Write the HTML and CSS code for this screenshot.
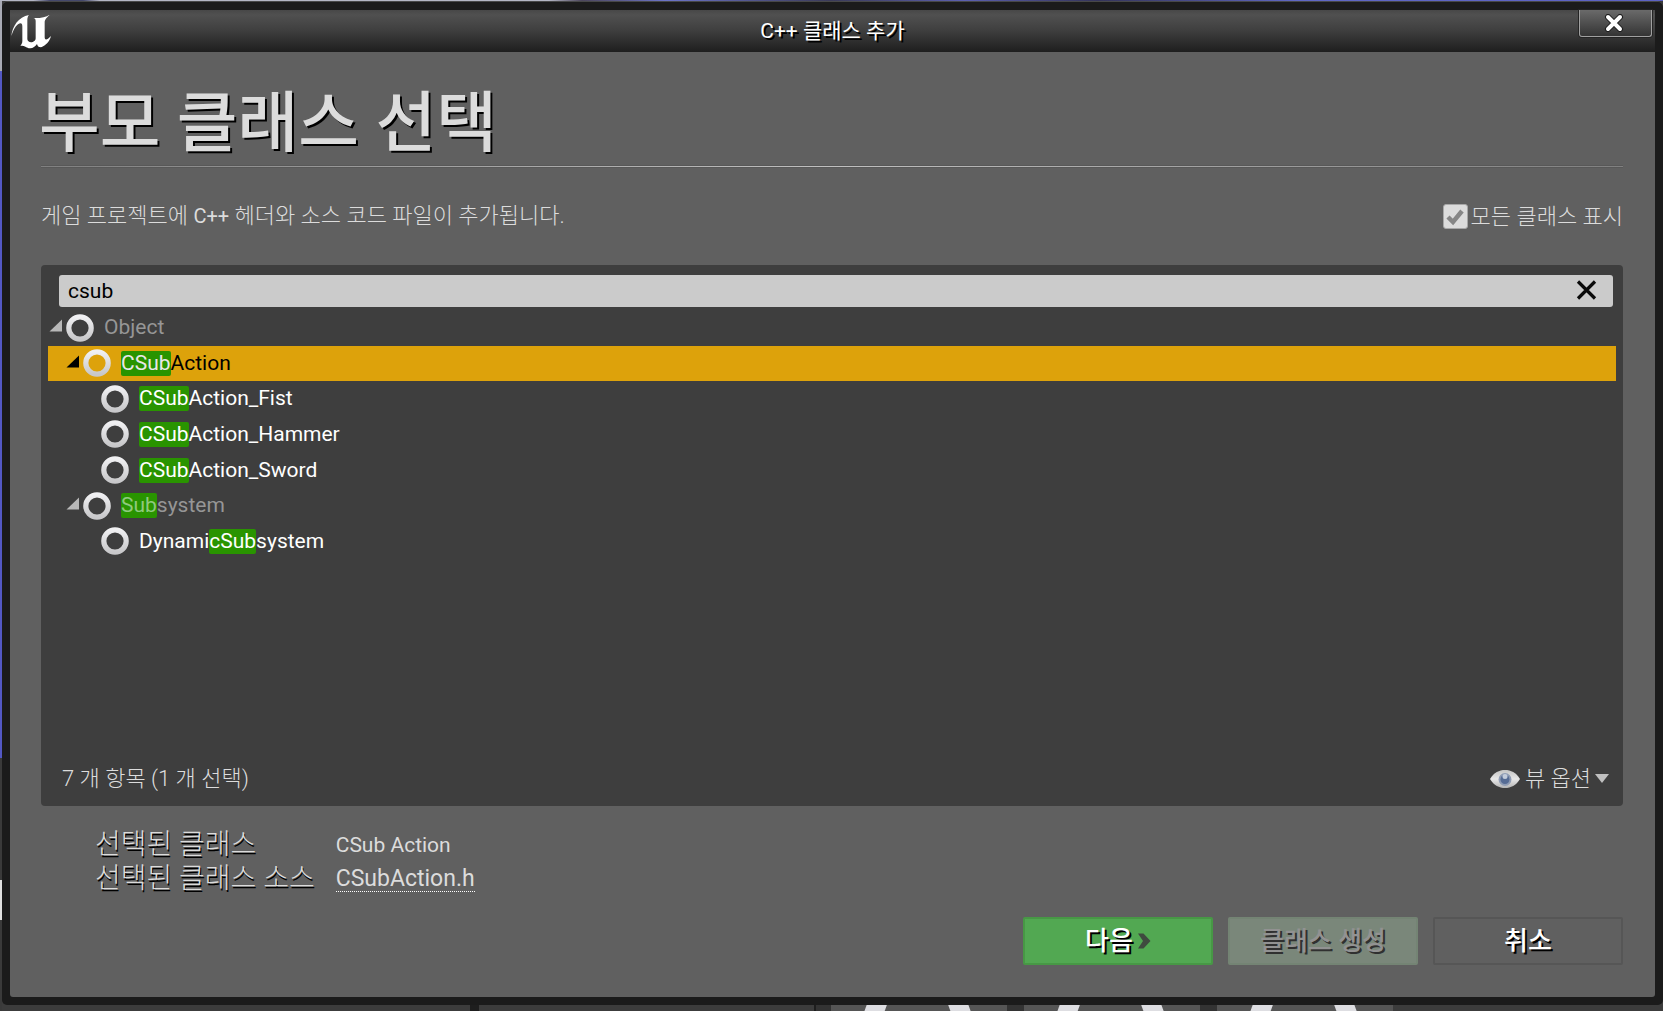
FILE: index.html
```html
<!DOCTYPE html>
<html lang="ko">
<head>
    <meta charset="UTF-8">
    <meta name="viewport" content="width=device-width, initial-scale=1.0">
    <title>C++ 클래스 추가</title>
    <link rel="stylesheet" href="styles.css">
</head>
<body>
    <svg class="symbols" aria-hidden="true">
        <defs>
            <linearGradient id="ring-fill" x1="0" y1="0" x2="0" y2="1">
                <stop offset="0" stop-color="#f0f0f2"/>
                <stop offset="1" stop-color="#c8c8ca"/>
            </linearGradient>
            <symbol id="ring" viewBox="0 0 28 28">
                <circle cx="14" cy="14" r="11.2" fill="none" stroke="url(#ring-fill)" stroke-width="5.2"/>
            </symbol>
            <symbol id="arrow" viewBox="0 0 14 13">
                <path d="M13 0.5V12.5H0.5Z" fill="currentColor"/>
            </symbol>
        </defs>
    </svg>

    <div class="window">
        <header class="title-bar">
            <svg class="logo" viewBox="30 40 126 108" aria-hidden="true">
                <path fill="#fff" d="M34 109C37 80 55 52 87 46C83 50 82 56 82 62V118C82 125 90 130 98 127C104 125 107 121 107 116V64C107 58 104 56 100 55C120 56 138 52 149 45C142 53 134 58 134 68V112C134 121 139 124 153 109C149 125 138 137 123 143C116 143 112 139 111 133C105 141 98 147 89 146C80 145 77 138 61 138C65 134 67 130 67 124V81C67 70 62 69 54 74C45 81 39 93 34 109Z"/>
            </svg>
            <span class="title">C++ 클래스 추가</span>
            <button class="close" type="button" aria-label="닫기">
                <svg width="20" height="18" viewBox="0 0 20 18" aria-hidden="true">
                    <path d="M4 3L16 15M16 3L4 15" stroke="#1c1c1c" stroke-width="6" stroke-linecap="round"/>
                    <path d="M4 3L16 15M16 3L4 15" stroke="#fff" stroke-width="4" stroke-linecap="round"/>
                </svg>
            </button>
        </header>

        <main class="content">
            <h1>부모 클래스 선택</h1>
            <hr class="rule">

            <div class="intro">
                <p>게임 프로젝트에 <span class="latin">C++</span> 헤더와 소스 코드 파일이 추가됩니다.</p>
                <label class="show-all">
                    <input type="checkbox" checked>
                    모든 클래스 표시
                </label>
            </div>

            <section class="panel">
                <div class="search">
                    <input type="text" value="csub" aria-label="클래스 검색">
                    <button type="button" aria-label="지우기">
                        <svg width="22" height="22" viewBox="0 0 22 22" aria-hidden="true">
                            <path d="M2 1.500L19 18.500M19 1.500L2 18.500" stroke="#0a0a0a" stroke-width="3.200"/>
                        </svg>
                    </button>
                </div>

                <ul class="tree" role="tree">
                    <li class="dim" role="treeitem">
                        <svg class="arrow"><use href="#arrow"/></svg>
                        <svg class="ring"><use href="#ring"/></svg>
                        <span>Object</span>
                    </li>
                    <li class="level-1 selected" role="treeitem" aria-selected="true">
                        <svg class="arrow"><use href="#arrow"/></svg>
                        <svg class="ring"><use href="#ring"/></svg>
                        <span><mark>CSub</mark>Action</span>
                    </li>
                    <li class="level-2" role="treeitem">
                        <svg class="ring"><use href="#ring"/></svg>
                        <span><mark>CSub</mark>Action_Fist</span>
                    </li>
                    <li class="level-2" role="treeitem">
                        <svg class="ring"><use href="#ring"/></svg>
                        <span><mark>CSub</mark>Action_Hammer</span>
                    </li>
                    <li class="level-2" role="treeitem">
                        <svg class="ring"><use href="#ring"/></svg>
                        <span><mark>CSub</mark>Action_Sword</span>
                    </li>
                    <li class="level-1 dim" role="treeitem">
                        <svg class="arrow"><use href="#arrow"/></svg>
                        <svg class="ring"><use href="#ring"/></svg>
                        <span><mark>Sub</mark>system</span>
                    </li>
                    <li class="level-2" role="treeitem">
                        <svg class="ring"><use href="#ring"/></svg>
                        <span>Dynami<mark>cSub</mark>system</span>
                    </li>
                </ul>

                <div class="status">
                    <span>7 개 항목 (1 개 선택)</span>
                    <button class="view-options" type="button">
                        <svg width="32" height="24" viewBox="0 0 32 24" aria-hidden="true">
                            <defs>
                                <linearGradient id="eye-fill" x1="0" y1="0" x2="0" y2="1">
                                    <stop offset="0" stop-color="#c4c4c4"/>
                                    <stop offset="0.5" stop-color="#e8e8e8"/>
                                    <stop offset="1" stop-color="#b4b4b4"/>
                                </linearGradient>
                            </defs>
                            <path d="M1 12C5 5.500 10 3 16 3S27 5.500 31 12C27 18.500 22 21 16 21S5 18.500 1 12Z" fill="url(#eye-fill)"/>
                            <circle cx="16" cy="12.500" r="6.500" fill="#909db5"/>
                            <circle cx="16" cy="12.500" r="4.500" fill="#566c95"/>
                            <circle cx="16" cy="9.500" r="2.500" fill="#c3ccdb"/>
                        </svg>
                        <span>뷰 옵션</span>
                        <svg width="14" height="10" viewBox="0 0 14 10" aria-hidden="true">
                            <path d="M0 0H14L7 9Z" fill="#c0c0c0"/>
                        </svg>
                    </button>
                </div>
            </section>

            <dl class="details">
                <dt>선택된 클래스</dt>
                <dd>CSub Action</dd>
                <dt>선택된 클래스 소스</dt>
                <dd><a href="#">CSubAction.h</a></dd>
            </dl>

            <footer class="actions">
                <button class="primary" type="button">
                    다음
                    <svg width="13" height="16" viewBox="0 0 13 16" aria-hidden="true">
                        <path d="M0 0.500H5.500L12.500 8L5.500 15.500H0L5 8Z" fill="#3f4a3f"/>
                    </svg>
                </button>
                <button class="create" type="button" disabled>클래스 생성</button>
                <button type="button">취소</button>
            </footer>
        </main>
    </div>

    <!-- editor behind the dialog -->
    <div class="backdrop-strip">
        <span class="tile"></span>
        <span class="tile"></span>
        <span class="tile"></span>
    </div>
</body>
</html>
```
FILE: styles.css
```css
* {
    box-sizing: border-box;
}

body {
    display: flex;
    flex-direction: column;
    min-height: 100vh;
    margin: 0;
    padding: 1px 0 0 2px;
    font-family: Roboto, "Noto Sans CJK KR", sans-serif;
    font-size: 21px;
    line-height: 25px;
    color: #dcdcdc;
    background:
        linear-gradient(90deg, #b4b6c4 0 2%, #44486c 3% 5%, #b4b6c4 6% 33%, #4c465c 35%, #6c74c8 40%, #3a3a58 50%, #5c60b0 58%, #34345a 66%, #6068c4 78%, #5c62c4) top / 100% 1px no-repeat,
        linear-gradient(#a8aab4 0 7%, #5358c4 7% 75%, #3a3a3a 75% 87%, #e0e0e0 87% 91%, #3a3a3a 91%) left / 2px 100% no-repeat,
        #3c3c3c;
}

button,
input {
    margin: 0;
    padding: 0;
    border: 0;
    background: none;
    font: inherit;
    color: inherit;
}

.symbols {
    position: absolute;
    width: 0;
    height: 0;
}

.window {
    display: flex;
    flex: 1;
    flex-direction: column;
    padding: 9px 8px 8px;
    border-radius: 5px;
    background: #1b1b1b;
    box-shadow: inset 0 1px #484848;
}

.title-bar {
    display: grid;
    grid-template-columns: 1fr auto 1fr;
    height: 42px;
    background: linear-gradient(#484848, #505050 12%, #3e3e3e 50%, #1e1e1e);
}

.logo {
    width: 42px;
    height: 36px;
    margin-top: 3px;
}

.title {
    align-self: center;
    color: #fff;
    text-shadow: 2px 2px #000;
}

.close {
    display: flex;
    align-items: center;
    justify-content: center;
    justify-self: end;
    width: 73px;
    height: 27px;
    margin-right: 3px;
    padding-right: 4px;
    border: 1px solid #a0a0a0;
    border-top: 0;
    border-radius: 0 0 3px 3px;
    background: linear-gradient(#6a6a6a, #343434);
    box-shadow: 0 0 0 1px #242424;
}

.content {
    display: flex;
    flex: 1;
    flex-direction: column;
    padding: 32px 32px 32px 31px;
    border-radius: 0 0 3px 3px;
    background: #606060;
}

h1 {
    margin: 0 0 1px -2px;
    font-size: 66px;
    font-weight: 500;
    line-height: 80px;
    text-shadow: 2px 2px #000;
}

.rule {
    width: 100%;
    height: 3px;
    margin: 0;
    border: solid #585858;
    border-width: 1px 0;
    background: linear-gradient(90deg, #808080, #c0c0c0 50%, #808080);
}

.intro {
    display: flex;
    align-items: center;
    justify-content: space-between;
    margin: 35px 0 36px;
    font-size: 22px;
    font-weight: 300;
}

.intro p {
    margin: 0;
}

.latin {
    font-size: 20px;
    font-weight: 400;
}

.show-all {
    display: flex;
    align-items: center;
    gap: 3px;
}

.show-all input {
    appearance: none;
    width: 25px;
    height: 25px;
    border: 1px solid #a8a8a8;
    border-radius: 3px;
    background: #dcdcdc url("data:image/svg+xml,%3Csvg xmlns='http://www.w3.org/2000/svg' viewBox='0 0 23 23'%3E%3Cpath d='M4 12L9 17L18 6' fill='none' stroke='%23868686' stroke-width='4.500'/%3E%3C/svg%3E") center no-repeat;
}

.panel {
    display: flex;
    flex: 1;
    flex-direction: column;
    padding: 10px 7px 15px;
    border-radius: 4px;
    background: #3e3e3e;
}

.search {
    display: flex;
    align-items: center;
    height: 32px;
    margin: 0 3px 3px 11px;
    padding: 0 15px 0 9px;
    border-radius: 3px;
    background: #cbcbcb;
    color: #000;
}

.search input {
    flex: 1;
    outline: 0;
}

.search button {
    display: flex;
}

/* rows share the height evenly */
.tree {
    display: grid;
    grid-auto-rows: 1fr;
    height: 249px;
    margin: 0;
    padding: 0;
    list-style: none;
    color: #fff;
}

.tree li {
    display: flex;
    align-items: center;
}

.tree .level-1 {
    padding-left: 17px;
}

.tree .level-2 {
    padding-left: 53px;
}

.tree .selected {
    background: #dda20b;
    color: #000;
}

.tree .dim {
    color: #969696;
}

.arrow {
    width: 14px;
    height: 13px;
    margin: 0 3px 4px 1px;
    color: #b8b8b8;
}

.selected .arrow {
    color: #000;
}

.ring {
    width: 28px;
    height: 28px;
    margin-right: 10px;
}

mark {
    display: inline-block;
    border-radius: 2px;
    background: #299400;
    color: #fff;
}

.selected mark {
    color: #e8e8e8;
}

.dim mark {
    color: #8fc97e;
}

.status {
    display: flex;
    align-items: center;
    justify-content: space-between;
    margin-top: auto;
    padding: 0 7px 0 14px;
    font-size: 22px;
    font-weight: 300;
}

.view-options {
    display: flex;
    align-items: center;
    gap: 4px;
}

.details {
    display: grid;
    grid-template-columns: auto 1fr;
    gap: 0 21px;
    margin: 22px 0 21px;
    padding-left: 54px;
    line-height: 34px;
}

.details dt {
    font-size: 28px;
    font-weight: 300;
    text-shadow: 1px 2px #000;
}

.details dd {
    margin: 0;
}

.details a {
    display: inline-block;
    border-bottom: 1px dotted #fff;
    font-size: 23px;
    line-height: 25px;
    color: inherit;
    text-decoration: none;
}

.actions {
    display: flex;
    justify-content: flex-end;
    gap: 15px;
}

.actions button {
    display: flex;
    align-items: center;
    justify-content: center;
    gap: 5px;
    width: 190px;
    height: 48px;
    border: 2px solid #565656;
    border-radius: 2px;
    color: #fff;
    font-size: 26px;
    font-weight: 500;
    text-shadow: 2px 2px #000;
}

.actions .primary {
    border-color: #479845;
    background: #52a852;
}

.actions .create {
    border-color: #748474;
    background: #7a877a;
    color: #929292;
    text-shadow: 2px 2px #303030;
}

.backdrop-strip {
    display: flex;
    gap: 17px;
    height: 6px;
    padding-left: 829px;
    background: linear-gradient(90deg, #3c3c3c 468px, #1e1e1e 468px 477px, #3c3c3c 477px 812px, #1e1e1e 812px 814px, #333 814px 1391px, #3c3c3c 1391px);
}

.tile {
    width: 176px;
    background:
        linear-gradient(110deg, #555 33px, #dedee2 34px 52px, #555 53px) left / 50% 100% no-repeat,
        linear-gradient(70deg, #555 29px, #dedee2 30px 48px, #555 49px) right / 50% 100% no-repeat;
}
```
